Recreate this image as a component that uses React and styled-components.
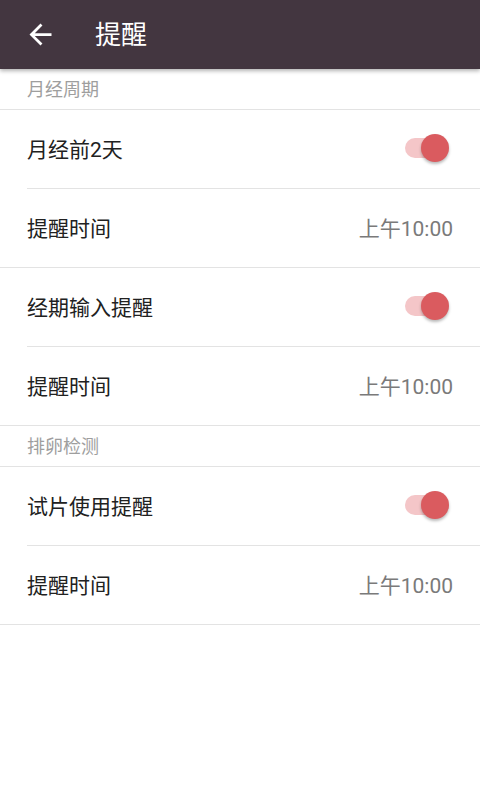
import styled, { createGlobalStyle } from 'styled-components';

const GlobalStyle = createGlobalStyle`
    html, body {
        margin:0;
        padding:0;
        background:#fff;
    }
    body {
        font-family:Roboto, "Noto Sans CJK SC", sans-serif;
    }
`
const Page = styled.div`
    width:480px;
    min-height:800px;
    background:#fff;
`
const Toolbar = styled.header`
    height:69px;
    background:#433640;
    display:flex;
    align-items:center;
    box-shadow:0 2px 4px rgba(0,0,0,0.3);
    position:relative;
    z-index:1;
`
const BackButton = styled.div`
    width:33px;
    height:33px;
    margin-left:24px;
    display:flex;
    align-items:center;
    justify-content:center;
`
const Title = styled.h1`
    margin:0 0 0 38px;
    color:#fff;
    font-size:26px;
    font-weight:400;
    line-height:1;
`
const SectionTitle = styled.div`
    height:41px;
    padding-left:27px;
    padding-bottom:2px;
    box-sizing:border-box;
    display:flex;
    align-items:center;
    color:#9e9e9e;
    font-size:18px;
    border-bottom:1px solid #e3e3e3;
`
const Row = styled.div`
    height:78px;
    padding:0 27px 3px;
    box-sizing:border-box;
    display:flex;
    align-items:center;
    justify-content:space-between;
`
const Label = styled.span`
    color:#212121;
    font-size:21px;
`
const Value = styled.span`
    color:#7a7a7a;
    font-size:21px;
`
const Divider = styled.div`
    height:1px;
    background:#e3e3e3;
    margin-left:${p => p.$inset ? '27px' : '0'};
`
const Track = styled.div`
    width:40px;
    height:20px;
    border-radius:10px;
    background:#f4c6c8;
    position:relative;
    margin-right:8px;
`
const Thumb = styled.div`
    position:absolute;
    top:-4px;
    right:-4px;
    width:28px;
    height:28px;
    border-radius:50%;
    background:#da5b5f;
    box-shadow:0 2px 3px rgba(0,0,0,0.28);
`

function Toggle() {
    return (
        <Track>
            <Thumb />
        </Track>
    )
}

const groups = [
    {
        title: '月经周期',
        rows: [
            [{ label: '月经前2天', toggle: true }, { label: '提醒时间', value: '上午10:00' }],
            [{ label: '经期输入提醒', toggle: true }, { label: '提醒时间', value: '上午10:00' }],
        ],
    },
    {
        title: '排卵检测',
        rows: [
            [{ label: '试片使用提醒', toggle: true }, { label: '提醒时间', value: '上午10:00' }],
        ],
    },
]

export default function App() {
    return (
        <Page>
            <GlobalStyle />
            <Toolbar>
                <BackButton>
                    <svg width="33" height="33" viewBox="0 0 24 24">
                        <path fill="#fff" d="M20 11H7.83l5.59-5.59L12 4l-8 8 8 8 1.41-1.41L7.83 13H20v-2z" />
                    </svg>
                </BackButton>
                <Title>提醒</Title>
            </Toolbar>
            {groups.map(group => (
                <div key={group.title}>
                    <SectionTitle>{group.title}</SectionTitle>
                    {group.rows.map((pair, i) => (
                        <div key={i}>
                            <Row>
                                <Label>{pair[0].label}</Label>
                                <Toggle />
                            </Row>
                            <Divider $inset />
                            <Row>
                                <Label>{pair[1].label}</Label>
                                <Value>{pair[1].value}</Value>
                            </Row>
                            <Divider />
                        </div>
                    ))}
                </div>
            ))}
        </Page>
    )
}
